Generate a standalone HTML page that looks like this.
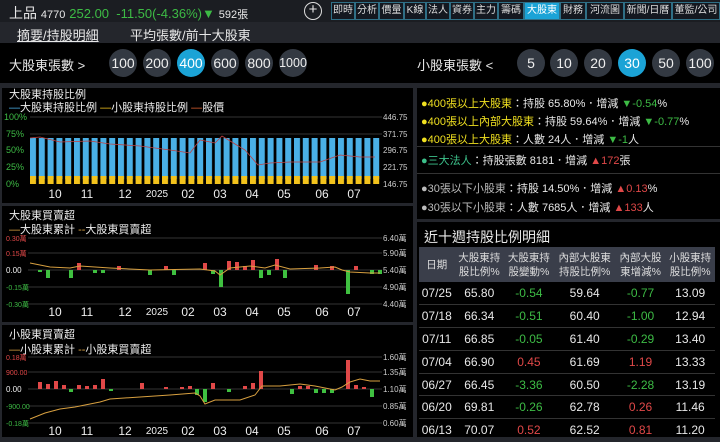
<!DOCTYPE html><html><head><meta charset="utf-8"><style>
*{margin:0;padding:0;box-sizing:border-box}
body{width:720px;height:437px;background:#24262c;font-family:"Liberation Sans","Noto Sans CJK TC",sans-serif;color:#e8e8e8;position:relative;overflow:hidden}
.a{position:absolute;white-space:nowrap}
.tab{position:absolute;top:2px;height:18px;border:1px solid #2f6f86;background:#141820;color:#ddd;font-size:10px;line-height:16px;text-align:center}
.c{position:absolute;width:28px;height:28px;border-radius:50%;background:#333942;color:#eee;font-size:14px;line-height:28px;text-align:center}
.c.on{background:#1ba3d6;color:#fff}
.p{position:absolute;background:#000}
.g{color:#3dbb45}.r{color:#e04848}.y{color:#f0e020}
table{border-collapse:collapse;font-size:12px}
</style></head><body>
<div class="a" style="left:0;top:0;width:720px;height:22px;background:#1b1d22"></div>
<div class="a" style="left:9px;top:3px;font-size:14px">上品 <span style="font-size:11px">4770</span> <span class="g" style="font-size:13px">252.00 &nbsp;-11.50(-4.36%)▼</span> <span style="font-size:11px">592張</span></div>
<div class="a" style="left:304px;top:2px;width:18px;height:18px;border:1.5px solid #ddd;border-radius:50%;text-align:center;font-size:15px;line-height:14px">+</div>
<div class="tab" style="left:331px;width:24px">即時</div><div class="tab" style="left:355px;width:24px">分析</div><div class="tab" style="left:379px;width:25px">價量</div><div class="tab" style="left:404px;width:22px">K線</div><div class="tab" style="left:426px;width:24px">法人</div><div class="tab" style="left:450px;width:24px">資券</div><div class="tab" style="left:474px;width:24px">主力</div><div class="tab" style="left:498px;width:26px">籌碼</div><div class="tab" style="left:524px;width:36px;background:#1ba3d6;color:#fff">大股東</div><div class="tab" style="left:560px;width:26px">財務</div><div class="tab" style="left:586px;width:38px">河流圖</div><div class="tab" style="left:624px;width:48px">新聞/日曆</div><div class="tab" style="left:672px;width:48px">董監/公司</div>
<div class="a" style="left:17px;top:25px;font-size:13px;text-decoration:underline">摘要/持股明細</div>
<div class="a" style="left:130px;top:25px;font-size:13px">平均張數/前十大股東</div>
<div class="a" style="left:0;top:43px;width:720px;height:40px;background:#000"></div>
<div class="a" style="left:9px;top:55px;font-size:13px">大股東張數 &gt;</div>
<div class="c" style="left:109px;top:49px">100</div><div class="c" style="left:143px;top:49px">200</div><div class="c on" style="left:177px;top:49px">400</div><div class="c" style="left:211px;top:49px">600</div><div class="c" style="left:245px;top:49px">800</div><div class="c" style="left:279px;top:49px;font-size:12.5px">1000</div>
<div class="a" style="left:417px;top:55px;font-size:13px">小股東張數 &lt;</div>
<div class="c" style="left:517px;top:49px">5</div><div class="c" style="left:550px;top:49px">10</div><div class="c" style="left:584px;top:49px">20</div><div class="c on" style="left:618px;top:49px">30</div><div class="c" style="left:652px;top:49px">50</div><div class="c" style="left:686px;top:49px">100</div>

<div class="p" style="left:2px;top:88px;width:411px;height:115px"></div>
<div class="p" style="left:2px;top:206px;width:411px;height:116px"></div>
<div class="p" style="left:2px;top:325px;width:411px;height:112px"></div>
<div class="p" style="left:417px;top:88px;width:303px;height:131px"></div>
<div class="p" style="left:417px;top:222px;width:303px;height:215px"></div>

<svg class="a" style="left:0;top:0" width="415" height="437" font-family="Liberation Sans,Noto Sans CJK TC,sans-serif">
<defs>
<pattern id="bb" x="30" y="0" width="8.8" height="10" patternUnits="userSpaceOnUse"><rect x="0" width="6" height="10" fill="#4ab0e6"/></pattern>
<pattern id="by" x="30" y="0" width="8.8" height="10" patternUnits="userSpaceOnUse"><rect x="0" width="6" height="10" fill="#f2c21c"/></pattern>
</defs>
<g font-size="11" fill="#eee"><text x="9" y="98">大股東持股比例</text>
<text x="9" y="111"><tspan fill="#4ab0e6">—</tspan>大股東持股比例 <tspan fill="#f2c21c">—</tspan>小股東持股比例 <tspan fill="#e06030">—</tspan>股價</text></g>
<g stroke="#444" stroke-width="0.7"><line x1="30" x2="382" y1="117" y2="117"/><line x1="30" x2="382" y1="134" y2="134"/></g>
<rect x="30" y="138" width="352" height="41" fill="url(#bb)"/>
<rect x="30" y="176" width="352" height="8" fill="url(#by)"/>
<polyline fill="none" stroke="#c04040" stroke-width="0.8" points="30,138 40,137 60,142 90,141 110,144 140,146 170,150 190,153 200,140 215,143 222,136 235,144 245,150 258,165 270,163 290,162 320,162 340,155 360,157 375,157"/>
<g font-size="9" fill="#3dbb45"><text x="4" y="120">100%</text><text x="6" y="137">75%</text><text x="6" y="153">50%</text><text x="6" y="170">25%</text><text x="6" y="187">0%</text></g>
<g font-size="8" fill="#ccc"><text x="383" y="120">446.75</text><text x="383" y="137">371.75</text><text x="383" y="153">296.75</text><text x="383" y="170">221.75</text><text x="383" y="187">146.75</text></g>
<g font-size="12" fill="#eee" text-anchor="middle"><text x="55" y="198">10</text><text x="87" y="198">11</text><text x="125" y="198">12</text><text x="157" y="197" font-size="10">2025</text><text x="188" y="198">02</text><text x="220" y="198">03</text><text x="252" y="198">04</text><text x="284" y="198">05</text><text x="322" y="198">06</text><text x="354" y="198">07</text></g>

<g font-size="11" fill="#eee"><text x="9" y="219">大股東買賣超</text><text x="9" y="233"><tspan fill="#d8a040">—</tspan>大股東累計 <tspan fill="#d8a040">--</tspan>大股東買賣超</text></g>
<g stroke="#444" stroke-width="0.7"><line x1="28" x2="382" y1="238" y2="238"/><line x1="28" x2="382" y1="253" y2="253"/><line x1="28" x2="382" y1="270" y2="270"/><line x1="28" x2="382" y1="287" y2="287"/><line x1="28" x2="382" y1="304" y2="304"/></g>
<g fill="#3fc040"><rect x="38" y="270" width="4" height="2"/><rect x="46" y="270" width="4" height="8"/><rect x="69" y="270" width="4" height="8"/><rect x="93" y="270" width="4" height="3"/><rect x="101" y="270" width="4" height="3"/><rect x="148" y="270" width="4" height="5"/><rect x="172" y="270" width="4" height="5"/><rect x="211" y="270" width="4" height="4"/><rect x="219" y="270" width="4" height="17"/><rect x="259" y="270" width="4" height="8"/><rect x="267" y="270" width="4" height="5"/><rect x="283" y="270" width="4" height="8"/><rect x="346" y="270" width="4" height="24"/><rect x="370" y="270" width="4" height="4"/><rect x="378" y="270" width="4" height="4"/></g>
<g fill="#e04848"><rect x="77" y="263" width="4" height="7"/><rect x="117" y="266" width="4" height="4"/><rect x="164" y="266" width="4" height="4"/><rect x="203" y="263" width="4" height="7"/><rect x="227" y="261" width="4" height="9"/><rect x="235" y="262" width="4" height="8"/><rect x="243" y="266" width="4" height="4"/><rect x="251" y="260" width="4" height="10"/><rect x="275" y="259" width="4" height="11"/><rect x="314" y="265" width="4" height="5"/><rect x="330" y="266" width="4" height="4"/><rect x="354" y="266" width="4" height="4"/></g>
<polyline fill="none" stroke="#d8a040" stroke-width="1" points="30,263 50,267 70,268 80,266 110,268 150,270 200,269 215,271 220,275 230,268 250,266 265,268 275,265 290,269 320,268 335,267 342,270 350,272 370,273 380,273"/>
<g font-size="7" ><text x="6" y="241" fill="#e04848">0.30萬</text><text x="6" y="256" fill="#e04848">0.15萬</text><text x="6" y="273" fill="#eee" font-size="8">0.00</text><text x="6" y="290" fill="#3dbb45">-0.15萬</text><text x="6" y="307" fill="#3dbb45">-0.30萬</text></g>
<g font-size="8" fill="#ccc"><text x="383" y="241">6.40萬</text><text x="383" y="256">5.90萬</text><text x="383" y="273">5.40萬</text><text x="383" y="290">4.90萬</text><text x="383" y="307">4.40萬</text></g>
<g font-size="12" fill="#eee" text-anchor="middle"><text x="55" y="316">10</text><text x="87" y="316">11</text><text x="125" y="316">12</text><text x="157" y="315" font-size="10">2025</text><text x="188" y="316">02</text><text x="220" y="316">03</text><text x="252" y="316">04</text><text x="284" y="316">05</text><text x="322" y="316">06</text><text x="354" y="316">07</text></g>

<g font-size="11" fill="#eee"><text x="9" y="338">小股東買賣超</text><text x="9" y="353"><tspan fill="#d8a040">—</tspan>小股東累計 <tspan fill="#d8a040">--</tspan>小股東買賣超</text></g>
<g stroke="#444" stroke-width="0.7"><line x1="28" x2="382" y1="357" y2="357"/><line x1="28" x2="382" y1="372" y2="372"/><line x1="28" x2="382" y1="389" y2="389"/><line x1="28" x2="382" y1="406" y2="406"/><line x1="28" x2="382" y1="423" y2="423"/></g>
<g fill="#e04848"><rect x="38" y="382" width="4" height="7"/><rect x="46" y="384" width="4" height="5"/><rect x="54" y="381" width="4" height="8"/><rect x="62" y="385" width="4" height="4"/><rect x="77" y="385" width="4" height="4"/><rect x="85" y="386" width="4" height="3"/><rect x="93" y="385" width="4" height="4"/><rect x="101" y="379" width="4" height="10"/><rect x="140" y="383" width="4" height="6"/><rect x="164" y="387" width="4" height="2"/><rect x="180" y="387" width="4" height="2"/><rect x="188" y="386" width="4" height="3"/><rect x="211" y="383" width="4" height="6"/><rect x="243" y="386" width="4" height="3"/><rect x="251" y="383" width="4" height="6"/><rect x="259" y="371" width="4" height="18"/><rect x="298" y="386" width="4" height="3"/><rect x="306" y="386" width="4" height="3"/><rect x="346" y="360" width="4" height="29"/><rect x="354" y="385" width="4" height="4"/><rect x="362" y="387" width="4" height="2"/></g>
<g fill="#3fc040"><rect x="69" y="389" width="4" height="3"/><rect x="109" y="389" width="4" height="2"/><rect x="195" y="389" width="4" height="6"/><rect x="203" y="389" width="4" height="13"/><rect x="227" y="389" width="4" height="3"/><rect x="290" y="389" width="4" height="5"/><rect x="314" y="389" width="4" height="4"/><rect x="322" y="389" width="4" height="4"/><rect x="330" y="389" width="4" height="4"/><rect x="370" y="389" width="4" height="8"/></g>
<polyline fill="none" stroke="#d8a040" stroke-width="1" points="30,419 45,413 60,409 75,407 90,404 100,402 110,399 140,397 170,395 195,393 200,396 205,404 215,400 240,400 255,395 262,386 280,386 300,384 315,386 335,390 342,387 350,382 360,379 370,381 380,381"/>
<g font-size="7"><text x="6" y="360" fill="#e04848">0.18萬</text><text x="6" y="375" fill="#e04848">900.00</text><text x="6" y="392" fill="#eee" font-size="8">0.00</text><text x="6" y="409" fill="#3dbb45">-900.00</text><text x="6" y="426" fill="#3dbb45">-0.18萬</text></g>
<g font-size="8" fill="#ccc"><text x="383" y="360">1.60萬</text><text x="383" y="375">1.35萬</text><text x="383" y="392">1.10萬</text><text x="383" y="409">0.85萬</text><text x="383" y="426">0.60萬</text></g>
<g font-size="12" fill="#eee" text-anchor="middle"><text x="55" y="435">10</text><text x="87" y="435">11</text><text x="125" y="435">12</text><text x="157" y="434" font-size="10">2025</text><text x="188" y="435">02</text><text x="220" y="435">03</text><text x="252" y="435">04</text><text x="284" y="435">05</text><text x="322" y="435">06</text><text x="354" y="435">07</text></g>
</svg>

<div class="a" style="left:421px;top:95px;font-size:11px;line-height:18px">
<div><span class="y">●400張以上大股東</span>：持股 65.80%．增減 <span class="g">▼-0.54</span>%</div>
<div><span class="y">●400張以上內部大股東</span>：持股 59.64%．增減 <span class="g">▼-0.77</span>%</div>
<div><span class="y">●400張以上大股東</span>：人數 24人．增減 <span class="g">▼-1</span>人</div>
</div>
<div class="a" style="left:417px;top:146px;width:303px;height:1px;background:#333"></div>
<div class="a" style="left:421px;top:152px;font-size:11px"><span style="color:#3cc08a">●三大法人</span>：持股張數 8181．增減 <span class="r">▲172</span>張</div>
<div class="a" style="left:417px;top:173px;width:303px;height:1px;background:#333"></div>
<div class="a" style="left:421px;top:180px;font-size:11px;line-height:19px">
<div><span style="color:#bbb">●30張以下小股東</span>：持股 14.50%．增減 <span class="r">▲0.13</span>%</div>
<div><span style="color:#bbb">●30張以下小股東</span>：人數 7685人．增減 <span class="r">▲133</span>人</div>
</div>
<div class="a" style="left:424px;top:227px;font-size:14px">近十週持股比例明細</div>
<table class="a" style="left:419px;top:247px;width:296px;text-align:center">
<tr style="background:#3a3e4a;color:#ddd;font-size:10.5px;height:35px;line-height:14px"><td>日期</td><td>大股東持<br>股比例%</td><td>大股東持<br>股變動%</td><td>內部大股東<br>持股比例%</td><td>內部大股<br>東增減%</td><td>小股東持<br>股比例%</td></tr>
<tr style="height:22.8px;border-bottom:1px solid #333"><td>07/25</td><td>65.80</td><td class="g">-0.54</td><td>59.64</td><td class="g">-0.77</td><td>13.09</td></tr>
<tr style="height:22.8px;border-bottom:1px solid #333"><td>07/18</td><td>66.34</td><td class="g">-0.51</td><td>60.40</td><td class="g">-1.00</td><td>12.94</td></tr>
<tr style="height:22.8px;border-bottom:1px solid #333"><td>07/11</td><td>66.85</td><td class="g">-0.05</td><td>61.40</td><td class="g">-0.29</td><td>13.40</td></tr>
<tr style="height:22.8px;border-bottom:1px solid #333"><td>07/04</td><td>66.90</td><td class="r">0.45</td><td>61.69</td><td class="r">1.19</td><td>13.33</td></tr>
<tr style="height:22.8px;border-bottom:1px solid #333"><td>06/27</td><td>66.45</td><td class="g">-3.36</td><td>60.50</td><td class="g">-2.28</td><td>13.19</td></tr>
<tr style="height:22.8px;border-bottom:1px solid #333"><td>06/20</td><td>69.81</td><td class="g">-0.26</td><td>62.78</td><td class="r">0.26</td><td>11.46</td></tr>
<tr style="height:22.8px"><td>06/13</td><td>70.07</td><td class="r">0.52</td><td>62.52</td><td class="r">0.81</td><td>11.20</td></tr>
</table>
</body></html>
